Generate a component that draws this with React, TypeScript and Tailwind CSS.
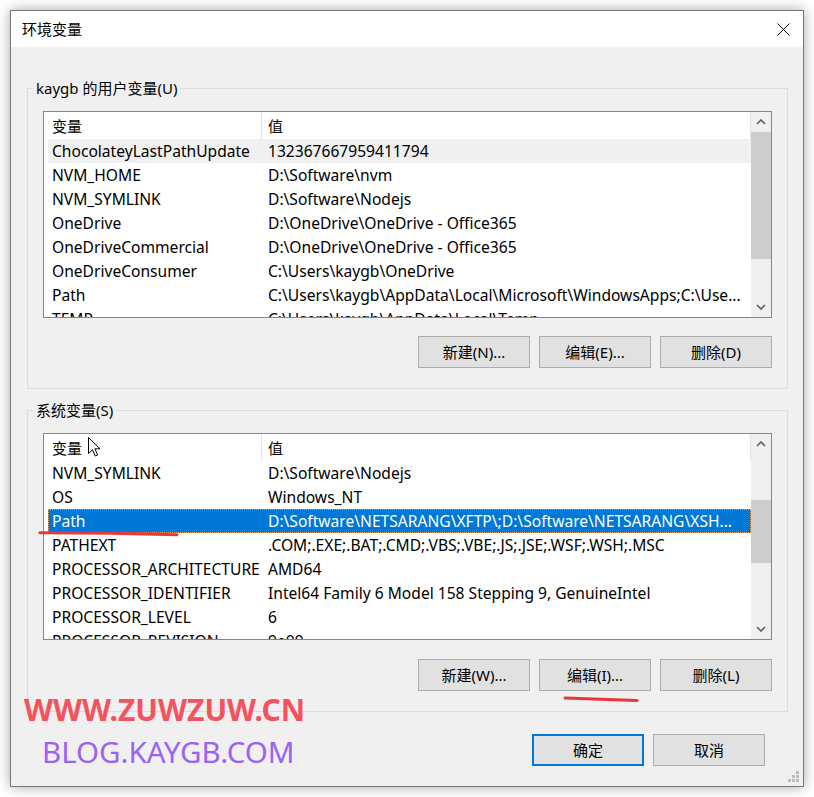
import React from "react"

const userVars: [string, string][] = [
  ["ChocolateyLastPathUpdate", "132367667959411794"],
  ["NVM_HOME", "D:\\Software\\nvm"],
  ["NVM_SYMLINK", "D:\\Software\\Nodejs"],
  ["OneDrive", "D:\\OneDrive\\OneDrive - Office365"],
  ["OneDriveCommercial", "D:\\OneDrive\\OneDrive - Office365"],
  ["OneDriveConsumer", "C:\\Users\\kaygb\\OneDrive"],
  ["Path", "C:\\Users\\kaygb\\AppData\\Local\\Microsoft\\WindowsApps;C:\\Use..."],
  ["TEMP", "C:\\Users\\kaygb\\AppData\\Local\\Temp"],
]

const systemVars: [string, string][] = [
  ["NVM_SYMLINK", "D:\\Software\\Nodejs"],
  ["OS", "Windows_NT"],
  ["Path", "D:\\Software\\NETSARANG\\XFTP\\;D:\\Software\\NETSARANG\\XSH..."],
  ["PATHEXT", ".COM;.EXE;.BAT;.CMD;.VBS;.VBE;.JS;.JSE;.WSF;.WSH;.MSC"],
  ["PROCESSOR_ARCHITECTURE", "AMD64"],
  ["PROCESSOR_IDENTIFIER", "Intel64 Family 6 Model 158 Stepping 9, GenuineIntel"],
  ["PROCESSOR_LEVEL", "6"],
  ["PROCESSOR_REVISION", "9e09"],
]

function Chevron({ up }: { up?: boolean }) {
  return (
    <svg width="10" height="6" viewBox="0 0 10 6" className="text-[#606060]">
      <path
        d={up ? "M1 5 L5 1 L9 5" : "M1 1 L5 5 L9 1"}
        fill="none"
        stroke="currentColor"
        strokeWidth="1.6"
      />
    </svg>
  )
}

function ScrollBar({ thumb }: { thumb: string }) {
  return (
    <div className="flex w-[20px] shrink-0 flex-col bg-[#f0f0f0]">
      <div className="flex h-[20px] shrink-0 items-center justify-center">
        <Chevron up />
      </div>
      <div className="flex-1">
        <div className={`bg-[#cdcdcd] ${thumb}`} />
      </div>
      <div className="flex h-[20px] shrink-0 items-center justify-center">
        <Chevron />
      </div>
    </div>
  )
}

function VarList({
  rows,
  thumb,
  hovered,
  selected,
}: {
  rows: [string, string][]
  thumb: string
  hovered?: number
  selected?: number
}) {
  return (
    <div className="flex h-[207px] border border-[#828790] bg-white">
      <div className="flex min-w-0 flex-1 flex-col overflow-hidden pl-[4px]">
        <div className="flex h-[27px] shrink-0 items-center border-r border-[#e5e5e5]">
          <div className="flex h-full w-[214px] shrink-0 items-center border-r border-[#e5e5e5] pl-[4px]">
            变量
          </div>
          <div className="pl-[6px]">值</div>
        </div>
        {rows.map(([name, value], i) => (
          <div
            key={name + i}
            className={
              i === selected
                ? "flex h-[24px] shrink-0 items-center bg-[#0078d7] text-[15.6px] text-white outline-1 outline-dotted outline-offset-[-1px] outline-[#e8a060]"
                : i === hovered
                  ? "flex h-[24px] shrink-0 items-center bg-[#f0f0f0] text-[15.6px]"
                  : "flex h-[24px] shrink-0 items-center text-[15.6px]"
            }
          >
            <div className="w-[214px] shrink-0 truncate pl-[4px]">{name}</div>
            <div className="min-w-0 flex-1 truncate whitespace-nowrap pl-[6px]">{value}</div>
          </div>
        ))}
      </div>
      <ScrollBar thumb={thumb} />
    </div>
  )
}

function Btn({ children, primary }: { children: React.ReactNode; primary?: boolean }) {
  return (
    <button
      className={
        primary
          ? "h-[32px] w-[112px] border-2 border-[#0078d7] bg-[#e1e1e1] text-[15px] text-black"
          : "h-[32px] w-[112px] border border-[#adadad] bg-[#e1e1e1] text-[15px] text-black"
      }
    >
      {children}
    </button>
  )
}

export default function App() {
  return (
    <div className="relative h-[797px] w-[814px] overflow-hidden bg-white font-['Noto_Sans','Noto_Sans_CJK_SC',sans-serif] text-[15px] leading-[20px] text-black">
      <div className="ml-[10px] mt-[10px] flex h-[777px] w-[794px] flex-col border border-[#777777] bg-[#f0f0f0] shadow-[0_0_12px_rgba(0,0,0,0.35)]">
        {/* title bar */}
        <div className="flex h-[36px] shrink-0 items-center justify-between bg-white pl-[11px] pr-[13px]">
          <span>环境变量</span>
          <svg width="13" height="13" viewBox="0 0 13 13">
            <path d="M0.5 0.5 L12.5 12.5 M12.5 0.5 L0.5 12.5" stroke="#000" strokeWidth="1" />
          </svg>
        </div>

        <div className="relative flex flex-1 flex-col">
          <fieldset className="ml-[16px] mr-[15px] mt-[31px] border border-[#dcdcdc] px-[15px] pb-[20px]">
            <legend className="-ml-[10px] px-[3px] leading-[20px]">kaygb 的用户变量(U)</legend>
            <div className="mt-[13px]">
              <VarList rows={userVars} thumb="h-[127px]" hovered={0} />
            </div>
            <div className="mt-[18px] flex justify-end gap-[9px]">
              <Btn>新建(N)...</Btn>
              <Btn>编辑(E)...</Btn>
              <Btn>删除(D)</Btn>
            </div>
          </fieldset>

          <fieldset className="ml-[16px] mr-[15px] mt-[11px] border border-[#dcdcdc] px-[15px] pb-[20px]">
            <legend className="-ml-[10px] px-[3px] leading-[20px]">系统变量(S)</legend>
            <div className="mt-[13px]">
              <VarList rows={systemVars} thumb="mt-[46px] h-[63px]" selected={2} />
            </div>
            <div className="mt-[19px] flex justify-end gap-[9px]">
              <Btn>新建(W)...</Btn>
              <Btn>编辑(I)...</Btn>
              <Btn>删除(L)</Btn>
            </div>
          </fieldset>

          <div className="mr-[38px] mt-[22px] flex justify-end gap-[9px]">
            <Btn primary>确定</Btn>
            <Btn>取消</Btn>
          </div>

          {/* size grip */}
          <svg className="absolute bottom-[3px] right-[3px]" width="12" height="12" viewBox="0 0 12 12">
            <g fill="#bcbcbc">
              <rect x="8" y="0" width="3" height="3" />
              <rect x="4" y="4" width="3" height="3" />
              <rect x="8" y="4" width="3" height="3" />
              <rect x="0" y="8" width="3" height="3" />
              <rect x="4" y="8" width="3" height="3" />
              <rect x="8" y="8" width="3" height="3" />
            </g>
          </svg>
        </div>
      </div>

      {/* mouse pointer */}
      <svg className="absolute left-[88px] top-[437px]" width="14" height="21" viewBox="0 0 14 21">
        <path d="M0.5 0.5 L0.5 16.5 L4.5 12.7 L7.2 19 L9.6 18 L7 11.8 L12 11.8 Z" fill="#fff" stroke="#000" strokeWidth="1" strokeLinejoin="round" />
      </svg>

      {/* red marks */}
      <svg className="pointer-events-none absolute left-0 top-0" width="814" height="797">
        <path d="M40 532.8 Q110 533 177 534.8" stroke="#e8383d" strokeWidth="3" fill="none" strokeLinecap="round" />
        <path d="M565 698 Q600 699 637 700.5" stroke="#e8383d" strokeWidth="3" fill="none" strokeLinecap="round" />
      </svg>

      {/* watermark */}
      <div className="absolute left-[24px] top-[690px] text-[30px] font-bold leading-[40px] text-[#f4525c]">
        WWW.ZUWZUW.CN
      </div>
      <div className="absolute left-[42px] top-[732px] text-[29.5px] leading-[40px] text-[#9a62f6]">
        BLOG.KAYGB.COM
      </div>
    </div>
  )
}
